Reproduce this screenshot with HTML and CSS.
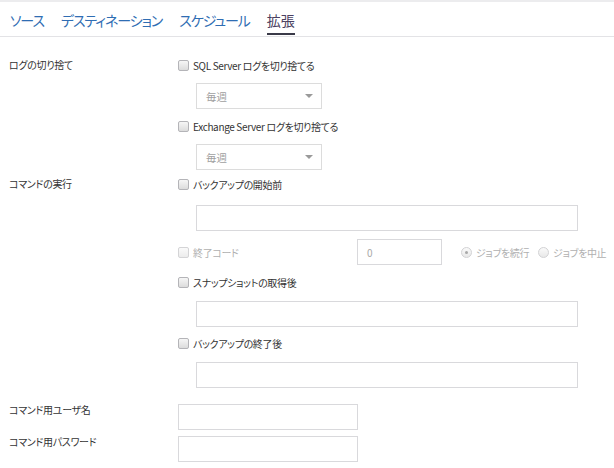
FILE: index.html
```html
<!DOCTYPE html>
<html lang="ja">
<head>
<meta charset="utf-8">
<link rel="stylesheet" href="styles.css">
</head>
<body>
<div class="tabs">
  <div class="tab">ソース</div>
  <div class="tab">デスティネーション</div>
  <div class="tab">スケジュール</div>
  <div class="tab active">拡張</div>
</div>
<div class="form">
  <div class="field first">
    <div class="label">ログの切り捨て</div>
    <div class="content">
      <div class="cbrow"><span class="cb"></span><span>SQL Server ログを切り捨てる</span></div>
      <div class="select s1"><span>毎週</span><span class="arrow"></span></div>
      <div class="cbrow r2"><span class="cb"></span><span>Exchange Server ログを切り捨てる</span></div>
      <div class="select s2"><span>毎週</span><span class="arrow"></span></div>
    </div>
  </div>
  <div class="field cmd">
    <div class="label">コマンドの実行</div>
    <div class="content">
      <div class="cbrow"><span class="cb"></span><span>バックアップの開始前</span></div>
      <div class="input wide i1"></div>
      <div class="exitrow">
        <div class="exitlabel"><span class="cb disabled"></span><span>終了コード</span></div>
        <div class="input code"><span>0</span></div>
        <div class="radio on"><span class="rd"></span><span>ジョブを続行</span></div>
        <div class="radio"><span class="rd"></span><span>ジョブを中止</span></div>
      </div>
      <div class="cbrow r4"><span class="cb"></span><span>スナップショットの取得後</span></div>
      <div class="input wide i2"></div>
      <div class="cbrow r5"><span class="cb"></span><span>バックアップの終了後</span></div>
      <div class="input wide i2"></div>
    </div>
  </div>
  <div class="field user">
    <div class="label tight">コマンド用ユーザ名</div>
    <div class="content"><div class="input short"></div></div>
  </div>
  <div class="field pass">
    <div class="label tight">コマンド用パスワード</div>
    <div class="content"><div class="input short"></div></div>
  </div>
</div>
</body>
</html>
```

FILE: styles.css
```css
html, body {
  margin: 0;
  padding: 0;
  background: #ffffff;
}
body {
  font-family: "Noto Sans CJK JP", "Noto Sans", sans-serif;
  font-feature-settings: "palt";
  color: #333333;
  width: 614px;
  height: 468px;
  overflow: hidden;
}
.tabs {
  display: flex;
  align-items: flex-start;
  gap: 17px;
  padding-left: 10px;
  border-top: 2px solid #ececee;
  border-bottom: 1px solid #e3e3e6;
  height: 34px;
}
.tab {
  height: 33px;
  box-sizing: border-box;
  padding-top: 8px;
  font-size: 14px;
  line-height: 20px;
  color: #2f6db3;
  border-bottom: 2px solid transparent;
  letter-spacing: -1.1px;
}
.tab.active {
  color: #4a4060;
  border-bottom-color: #3a3a48;
  letter-spacing: 0;
}
.form {
  padding-top: 18px;
}
.field {
  display: grid;
  grid-template-columns: 178px 400px;
}
.label {
  padding-left: 9px;
  font-size: 10px;
  line-height: 19px;
  color: #333333;
  letter-spacing: -0.3px;
}
.label.tight {
  line-height: 12px;
}
.cbrow, .exitlabel, .radio {
  display: flex;
  align-items: center;
  gap: 4px;
  font-size: 10px;
  height: 20px;
  white-space: nowrap;
  letter-spacing: -0.35px;
}
.content {
  display: flex;
  flex-direction: column;
  align-items: flex-start;
}
.cb {
  width: 9px;
  height: 9px;
  border: 1px solid #b4b4b8;
  border-radius: 2px;
  background: linear-gradient(#f6f6f6, #dcdcdc);
  flex: none;
}
.cb.disabled {
  border-color: #d4d4d6;
  background: linear-gradient(#fafafa, #ececec);
}
.select {
  margin-left: 18px;
  width: 126px;
  height: 26px;
  box-sizing: border-box;
  border: 1px solid #dcdcdc;
  display: flex;
  align-items: center;
  justify-content: space-between;
  padding: 0 8px 0 9px;
  font-size: 10.5px;
  color: #a0a0a0;
}
.arrow {
  width: 0;
  height: 0;
  border-left: 4px solid transparent;
  border-right: 4px solid transparent;
  border-top: 4px solid #9a9a9a;
}
.s1 { margin-top: 8px; }
.cbrow.r2 { margin-top: 7px; }
.s2 { margin-top: 8px; }
.field.cmd { margin-top: 4px; }
.input {
  height: 26px;
  box-sizing: border-box;
  border: 1px solid #d9d9dc;
  background: #ffffff;
}
.input.wide {
  margin-left: 18px;
  width: 382px;
}
.i1 { margin-top: 11px; }
.i2 { margin-top: 9px; }
.exitrow {
  margin-top: 8px;
  display: flex;
  align-items: center;
  height: 26px;
  white-space: nowrap;
}
.exitlabel {
  width: 179px;
  color: #b0b0b0;
}
.input.code {
  width: 85px;
  display: flex;
  align-items: center;
  padding-left: 9px;
  font-size: 10px;
  color: #a8a8a8;
}
.radio {
  color: #b0b0b0;
  margin-left: 9px;
}
.radio.on {
  margin-left: 19px;
}
.rd {
  width: 9px;
  height: 9px;
  border: 1px solid #d2d2d4;
  border-radius: 50%;
  background: linear-gradient(#fafafa, #e8e8e8);
  flex: none;
  position: relative;
}
.radio.on .rd::after {
  content: "";
  position: absolute;
  left: 3px;
  top: 3px;
  width: 3px;
  height: 3px;
  border-radius: 50%;
  background: #a8a8a8;
}
.cbrow.r4 { margin-top: 7px; }
.cbrow.r5 { margin-top: 6px; }
.field.user { margin-top: 16px; }
.field.pass { margin-top: 6px; }
.input.short {
  width: 180px;
}
```
